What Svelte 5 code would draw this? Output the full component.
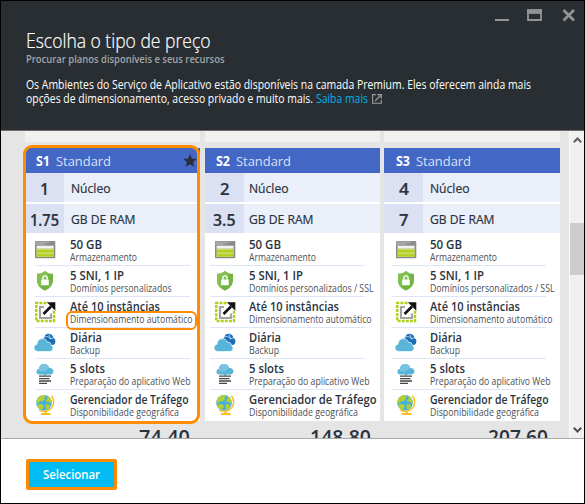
<script>
  const items = [
    { icon: 'storage', title: '50 GB', tw: 32, sub: 'Armazenamento', sw: 67 },
    { icon: 'shield', title: '5 SNI, 1 IP', tw: 54, sub: 'Domínios personalizados / SSL', sw: 124.5 },
    { icon: 'scale', title: 'Até 10 instâncias', tw: 90, sub: 'Dimensionamento automático', sw: 122.5 },
    { icon: 'backup', title: 'Diária', tw: 32, sub: 'Backup', sw: 30 },
    { icon: 'slots', title: '5 slots', tw: 35, sub: 'Preparação do aplicativo Web', sw: 120.5 },
    { icon: 'globe', title: 'Gerenciador de Tráfego', tw: 118.5, sub: 'Disponibilidade geográfica', sw: 109 },
  ];

  const plans = [
    {
      code: 'S1', cores: '1', coresW: 9, ram: '1.75', ramW: 29, price: '74.40', priceW: 51, priceEnd: 10,
      selected: true, icon: 9, text: 45, rule: 10, label: 45.5, head: 10.5,
      items: items.map((i) => (i.icon === 'shield' ? { ...i, sub: 'Domínios personalizados', sw: 101.5 } : i)),
    },
    {
      code: 'S2', cores: '2', coresW: 9.5, ram: '3.5', ramW: 22.5, price: '148.80', priceW: 61, priceEnd: 9,
      icon: 9, text: 44, rule: 5, label: 44, head: 11,
      items: items.map((i) => (i.icon === 'globe' ? { ...i, tw: 127.5 } : i)),
    },
    {
      code: 'S3', cores: '4', coresW: 10, ram: '7', ramW: 9.5, price: '207.60', priceW: 60, priceEnd: 12,
      icon: 10.5, text: 46, rule: 7, label: 46, head: 12, items,
    },
  ];

  // Condenses or widens a label so that it takes the given width.
  function fit(node, width) {
    const natural = node.getBoundingClientRect().width;
    node.style.width = width + 'px';
    node.style.transform = `scaleX(${width / natural})`;
  }
</script>

{#snippet glyph(name)}
  <svg class="glyph" width="22" height="22" viewBox="0 0 22 22">
    {#if name === 'storage'}
      <rect x="1" y="2" width="20.3" height="17.3" rx=".8" fill="#8b8b8b" />
      <path d="M1.5 2.5H18L9 6H1.5z" fill="#a5a5a5" />
      <rect x="2.6" y="6.7" width="17" height="3" fill="#f1f1f1" />
      <rect x="2.6" y="9.7" width="17" height="8.2" fill="#d8e890" />
      <rect x="2.6" y="10.6" width="17" height="3" fill="#b1cf25" />
      <rect x="2.6" y="14.6" width="17" height="3" fill="#b1cf25" />
    {:else if name === 'shield'}
      <path d="M11 1C9 3 6 3.8 3 3.8V10c0 5.500 3.500 8.600 8 10.700 4.500-2.100 8-5.200 8-10.700V3.800C16 3.800 13 3 11 1z" fill="#6fb53f" />
      <path d="M11 1C9 3 6 3.800 3 3.800V10c0 3.200 1.100 5.600 3 7.400L15.500 3.300C13.800 2.800 12.200 2.200 11 1z" fill="#82c04f" />
      <rect x="7.200" y="9.600" width="7.600" height="5.700" rx=".5" fill="#fff" />
      <path d="M8.900 9.800V8a2.100 2.100 0 0 1 4.200 0v1.800" fill="none" stroke="#fff" stroke-width="1.400" />
    {:else if name === 'scale'}
      <path d="M12.500 2H2.200v18H20V9" fill="none" stroke="#b1d01c" stroke-width="2.500" stroke-dasharray="3 1.100" />
      <path d="M10 6H6v11h11V12.500" fill="none" stroke="#a3a3a3" stroke-width="2.200" />
      <path d="M9.500 13L17 5.500" stroke="#111" stroke-width="2.700" />
      <path d="M12.800 1.300h8.500v8.500z" fill="#111" />
    {:else if name === 'backup'}
      <path d="M10 12C7.500 10 7.500 7 10 6c.5-3.500 3.500-5 6.200-4 2 .700 3 2 3.200 4 2 1 2.500 3.500 1.600 5.200-.8 1.500-2 1.800-3.500 1.800z" fill="#1b6cb7" />
      <path d="M9.500 5.500c2.500-1.800 5.500-1 7 1.500M15 2.500l1.500 4.500 3.200-1.500" fill="none" stroke="#d2e4f4" stroke-width=".8" />
      <path d="M4.200 19.500C1.500 19.500 0 18 0 15.800c0-2 1.300-3.300 3-3.600C3.200 9 5.200 6.600 8.300 6.600c2.500 0 4.200 1.300 5 3.500 2.600-.3 4 1.400 4 3.200 1.200.6 1.700 1.700 1.700 2.900 0 2-1.400 3.300-3.300 3.300z" fill="#59b4d9" stroke="#fff" stroke-width=".7" />
    {:else if name === 'slots'}
      <path d="M5.500 11.500C3.500 11.500 2.400 10.400 2.400 8.600c0-1.500 1-2.500 2.400-2.700C5.200 3 7.200 1 10 1c2.700 0 4.600 1.500 5.200 4 2.600-.1 4.300 1.200 4.300 3.300 0 1.800-1.200 3.200-3.300 3.200h-3.700L11 13l-1.500-1.500z" fill="#59b4d9" />
      <path d="M4.500 7.500c2 .800 3.500 1.500 5.500 1 2-.5 2.500-2.500 5.200-3.500C14.600 2.500 12.700 1 10 1 7.200 1 5.200 3 4.800 5.900z" fill="#77c3e1" />
      <path d="M5 13.200h12M5 15.600h10.500M5 18h12M5 20.400h8" stroke="#464646" stroke-width="1.300" />
    {:else}
      <path d="M17.500 1.800c3 4 2.800 9.500-.5 12.700-3.200 3.200-8.200 3.700-11.800 1.300" fill="none" stroke="#fdbb1d" stroke-width="1.500" />
      <path d="M11.500 17v2.500M7 20h9.500" stroke="#fdbb1d" stroke-width="2.100" />
      <circle cx="10" cy="8.800" r="7.800" fill="#47afdd" />
      <path d="M4.500 3.500C6.500 1.500 8.500 1 10.500 1L12 2.500 10 4l1 1.500-3 2L6.500 7 4 9.500 2.500 8.500C2.500 6.500 3.200 4.900 4.500 3.500zM13.500 2c2.500 1.200 4 3.400 4.300 6L16 9l-2-1.500-1.500.5-.5-2 1.500-1zM4 10.500l3.500-.5 2.500 2-1 2-1.500 2C5.500 15 4 13.500 3 11.500zM12 10l3.500.5.500 2-2.500 2.800-1.500.5-.5-3z" fill="#b4d133" />
    {/if}
  </svg>
{/snippet}

<div class="blade">
  <header>
    <div class="controls">
      <svg width="80" height="13" viewBox="0 0 80 13" fill="none" stroke="#919496">
        <path d="M0 11h14" stroke-width="2" />
        <path d="M33 1.200h13v9.800h-13z" stroke-width="1.800" />
        <path d="M32 2.600h15" stroke-width="4.600" />
        <path d="M68.500 1l10.500 10.500M79 1L68.500 11.500" stroke-width="2.700" />
      </svg>
    </div>
    <h1><span use:fit={184.5}>Escolha o tipo de preço</span></h1>
    <h2><span use:fit={198.5}>Procurar planos disponíveis e seus recursos</span></h2>
    <p><span use:fit={505}>Os Ambientes do Serviço de Aplicativo estão disponíveis na camada Premium. Eles oferecem ainda mais</span></p>
    <p>
      <span use:fit={287}>opções de dimensionamento, acesso privado e muito mais.</span>
      <a href="#more"><span use:fit={52}>Saiba mais</span></a>
      <svg class="external" width="10" height="10" viewBox="0 0 10 10" fill="none" stroke="#9b9ea0">
        <path d="M3.800.600H.600v8.700h8.700V6" stroke-width="1.100" />
        <path d="M3 7L8.500 1.500M5.200.600h4.100v4.100" stroke-width="1.200" />
      </svg>
    </p>
  </header>

  <main>
    <div class="list">
      {#each plans as p}
        <section>
          <div class="previous"></div>
          <div class="card">
            <div class="head" style:padding-left="{p.head}px">
              <b use:fit={14}>{p.code}</b>
              <span use:fit={55}>Standard</span>
              {#if p.selected}
                <svg class="star" width="14" height="13" viewBox="0 0 14 13"><path d="M7 0l1.900 4.500 4.900.4-3.700 3.200 1.100 4.700L7 10.300l-4.200 2.500 1.100-4.700L.2 4.900l4.900-.4z" fill="#292e38" /></svg>
              {/if}
            </div>
            <div class="spec">
              <div class="amount"><span use:fit={p.coresW}>{p.cores}</span></div>
              <div class="label" style:padding-left="{p.label - 39}px"><span use:fit={39.5}>Núcleo</span></div>
            </div>
            <div class="spec">
              <div class="amount"><span use:fit={p.ramW}>{p.ram}</span></div>
              <div class="label" style:padding-left="{p.label - 39}px"><span use:fit={64.5}>GB DE RAM</span></div>
            </div>
            <div class="items" style:--rule="{p.rule}px">
              {#each p.items as it}
                <div class="item">
                  <div class="pic" style:padding-left="{p.icon}px" style:width="{p.text}px">{@render glyph(it.icon)}</div>
                  <div class="words">
                    <div class="title"><span use:fit={it.tw}>{it.title}</span></div>
                    <div class="sub"><span use:fit={it.sw}>{it.sub}</span></div>
                  </div>
                  {#if p.selected && it.icon === 'scale'}<div class="mark"></div>{/if}
                </div>
              {/each}
            </div>
            {#if p.selected}<div class="ring"></div>{/if}
          </div>
          <div class="price" style:padding-right="{p.priceEnd}px"><span use:fit={p.priceW}>{p.price}</span></div>
        </section>
      {/each}
    </div>
    <div class="scrollbar">
      <svg width="9" height="6" viewBox="0 0 9 6"><path d="M.8 5.200L4.500 1.500l3.700 3.700" fill="none" stroke="#606060" stroke-width="2" /></svg>
      <div class="thumb"></div>
      <svg width="9" height="6" viewBox="0 0 9 6"><path d="M.8.800L4.500 4.500 8.200.800" fill="none" stroke="#505050" stroke-width="2" /></svg>
    </div>
  </main>

  <footer>
    <button><span use:fit={57}>Selecionar</span></button>
  </footer>
</div>

<style>
  .blade {
    box-sizing: border-box;
    width: 585px;
    height: 504px;
    border: 1px solid #000;
    display: flex;
    flex-direction: column;
    background: #fff;
    overflow: hidden;
    font-family: "Open Sans", "Noto Sans", sans-serif;
    color: #29323d;
    white-space: nowrap;
  }
  span, b { display: inline-block; transform-origin: 0 50%; text-align: left; }
  header {
    box-sizing: border-box;
    height: 130px;
    padding-left: 25px;
    background: #292e32;
    border-bottom: 1px solid #6f6a6e;
    color: #fff;
    flex: none;
  }
  .controls { height: 28px; padding: 8px 0 0 469px; box-sizing: border-box; display: flex; }
  h1 { margin: 0; font-size: 19.5px; line-height: 23px; font-weight: 300; height: 22px; -webkit-text-stroke: .2px #fff; }
  h2 { margin: 2px 0 12px; font-size: 10px; line-height: 12px; height: 12px; font-weight: 600; color: #a3a6aa; }
  p { margin: 0; font-size: 12px; line-height: 15px; height: 14px; display: flex; }
  a { color: #00b3ea; text-decoration: none; margin-left: 3px; }
  .external { margin: 3px 0 0 4px; }

  main { height: 307px; display: flex; background: #e5e5e5; flex: none; border-bottom: 1px solid #a9a9a9; overflow: hidden; }
  .list {
    width: 544px;
    padding-left: 24px;
    display: grid;
    grid-template-columns: 180px 179.3px 176px;
  }
  section { width: 175px; }
  section:nth-child(3) { width: 175.500px; }
  .previous { height: 11px; background: #f1f1f1; }
  .card { position: relative; margin-top: 6px; background: #fff; }
  .head {
    height: 25px;
    background: #4367c5;
    color: #d8e0f6;
    display: flex;
    align-items: center;
    font-size: 13.5px;
    line-height: 24px;
  }
  .head b { color: #fff; font-weight: 700; margin-right: 6px; }
  .star { margin-left: 72px; }
  .spec { height: 29px; display: flex; margin-bottom: 2px; }
  .amount {
    width: 39px;
    background: #dbe1f3;
    text-align: center;
    font-size: 16.5px;
    font-weight: 600;
    line-height: 32px;
    height: 29px;
    -webkit-text-stroke: .2px #29323d;
  }
  .label { flex: 1; background: #ebeff9; font-size: 12.5px; line-height: 31px; height: 29px; -webkit-text-stroke: .2px #29323d; }
  .item { position: relative; height: 31px; display: flex; }
  .item:not(:last-child)::after {
    content: "";
    position: absolute;
    left: var(--rule);
    bottom: 0;
    width: 155px;
    height: 1px;
    background: #dce6f7;
  }
  .pic { box-sizing: border-box; padding-top: 4px; flex: none; }
  .glyph { display: block; }
  .words { padding-top: 2px; }
  .title { font-size: 13px; line-height: 14px; height: 14px; font-weight: 600; }
  .sub { font-size: 10px; line-height: 13px; height: 13px; color: #4b5057; }
  .mark {
    position: absolute;
    box-sizing: border-box;
    left: 41px;
    top: 14px;
    width: 131px;
    height: 19px;
    border: 2px solid #ff8c00;
    border-radius: 6px;
    z-index: 1;
  }
  .ring { position: absolute; inset: -3px 0 -3px -2px; border: 3px solid #ff8c00; border-radius: 9px; }
  .price { margin-top: 2px; text-align: right; font-size: 20px; line-height: 28px; font-weight: 600; height: 15px; }

  .scrollbar {
    box-sizing: border-box;
    width: 15px;
    background: #f0f0f0;
    border-left: 1px solid #fafafa;
    display: flex;
    flex-direction: column;
    align-items: center;
    padding: 6px 0 5px;
  }
  .thumb { width: 14px; height: 52px; background: #cdcdcd; margin: 80px 0 auto; }

  footer { flex: 1; padding: 20px 25px; }
  button {
    box-sizing: border-box;
    width: 91px;
    height: 31px;
    padding: 0;
    border: 3px solid #ff8c00;
    border-radius: 2px;
    background: #00bcf2;
    color: #fff;
    font: 600 12px/24px "Open Sans", "Noto Sans", sans-serif;
    display: block;
  }
</style>
